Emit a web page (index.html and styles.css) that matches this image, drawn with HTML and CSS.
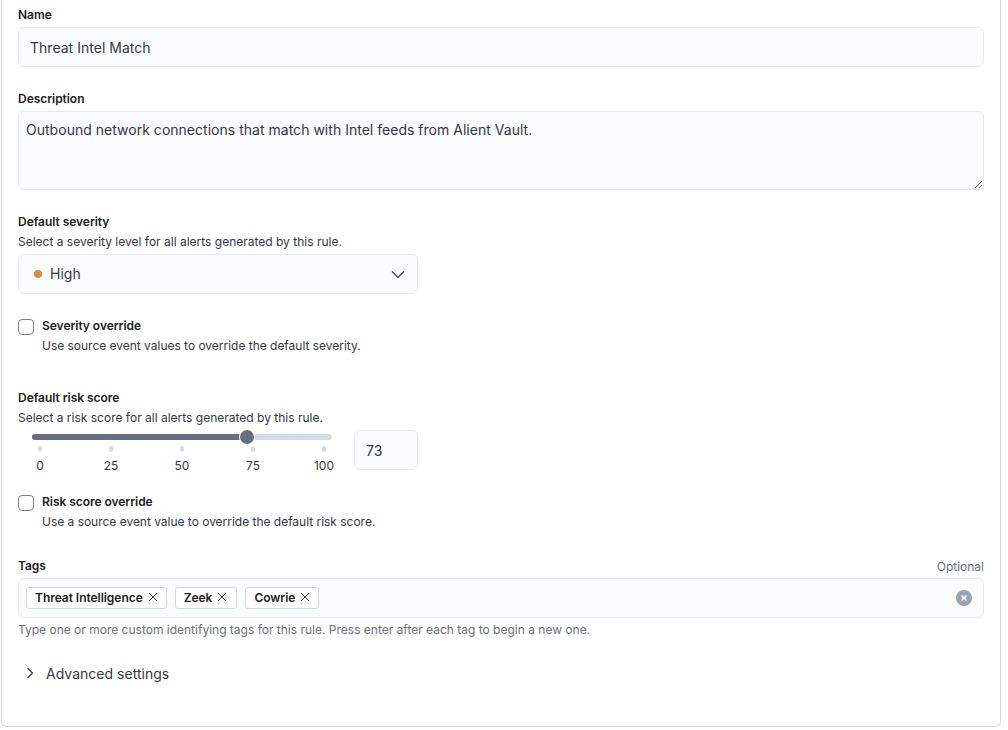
FILE: index.html
```html
<!DOCTYPE html>
<html lang="en">
<head>
<meta charset="utf-8">
<title>Rule settings</title>
<link rel="stylesheet" href="styles.css">
</head>
<body>
<main class="panel">
  <section class="field name-field">
    <div class="label">Name</div>
    <div class="control name-input">Threat Intel Match</div>
  </section>
  <section class="field desc-field">
    <div class="label">Description</div>
    <textarea class="control desc-input" spellcheck="false">Outbound network connections that match with Intel feeds from Alient Vault.</textarea>
  </section>
  <section class="field severity-field">
    <div class="label">Default severity</div>
    <div class="help">Select a severity level for all alerts generated by this rule.</div>
    <div class="control select">
      <span class="dot"></span>
      <span class="select-text">High</span>
      <svg class="chevron" width="16" height="16" viewBox="0 0 16 16" fill="none"><path d="M2 5.5 8 11.5l6-6" stroke="#343741" stroke-width="1.2"/></svg>
    </div>
  </section>
  <section class="check-row sev-override">
    <span class="checkbox"></span>
    <div>
      <div class="label">Severity override</div>
      <div class="help check-help">Use source event values to override the default severity.</div>
    </div>
  </section>
  <section class="field risk-field">
    <div class="label">Default risk score</div>
    <div class="help">Select a risk score for all alerts generated by this rule.</div>
    <div class="risk-row">
      <div class="slider">
        <div class="track"><div class="track-fill"></div><div class="thumb"></div></div>
        <div class="ticks">
          <div class="tick"><i></i><span>0</span></div>
          <div class="tick"><i></i><span>25</span></div>
          <div class="tick"><i></i><span>50</span></div>
          <div class="tick"><i></i><span>75</span></div>
          <div class="tick"><i></i><span>100</span></div>
        </div>
      </div>
      <div class="control number">73</div>
    </div>
  </section>
  <section class="check-row risk-override">
    <span class="checkbox"></span>
    <div>
      <div class="label">Risk score override</div>
      <div class="help check-help">Use a source event value to override the default risk score.</div>
    </div>
  </section>
  <section class="field tags-field">
    <div class="label-row">
      <div class="label">Tags</div>
      <div class="optional">Optional</div>
    </div>
    <div class="control tags">
      <span class="tag">Threat Intelligence<svg class="tag-x" width="10" height="10" viewBox="0 0 10 10"><path d="M1 1l8 8M9 1 1 9" stroke="#343741" stroke-width="1"/></svg></span>
      <span class="tag">Zeek<svg class="tag-x" width="10" height="10" viewBox="0 0 10 10"><path d="M1 1l8 8M9 1 1 9" stroke="#343741" stroke-width="1"/></svg></span>
      <span class="tag">Cowrie<svg class="tag-x" width="10" height="10" viewBox="0 0 10 10"><path d="M1 1l8 8M9 1 1 9" stroke="#343741" stroke-width="1"/></svg></span>
      <svg class="clear" width="16" height="16" viewBox="0 0 16 16"><circle cx="8" cy="8" r="8" fill="#98a2b3"/><path d="M5.5 5.5l5 5M10.5 5.5l-5 5" stroke="#fff" stroke-width="1.6"/></svg>
    </div>
    <div class="help muted">Type one or more custom identifying tags for this rule. Press enter after each tag to begin a new one.</div>
  </section>
  <div class="advanced">
    <svg width="16" height="16" viewBox="0 0 16 16" fill="none"><path d="M5.5 3l5 5-5 5" stroke="#343741" stroke-width="1.2"/></svg>
    <span>Advanced settings</span>
  </div>
</main>
</body>
</html>
```
FILE: styles.css
```css
* { box-sizing: border-box; }
html, body { margin: 0; padding: 0; background: #fff; }
body {
  width: 1008px;
  height: 730px;
  overflow: hidden;
  font-family: Inter, "Liberation Sans", sans-serif;
  color: #343741;
}
.panel {
  width: 1000px;
  height: 727px;
  margin-left: 1px;
  padding: 8px 16px 0;
  border: 1px solid #d3dae6;
  border-top: 0;
  border-radius: 0 0 6px 6px;
}
.label {
  font-size: 12px;
  line-height: 14px;
  font-weight: 600;
  letter-spacing: -0.04px;
  color: #1a1c21;
}
.help {
  font-size: 12px;
  line-height: 16px;
  color: #343741;
}
.muted { color: #69707d; }
.control {
  background: #fafbfd;
  border: 1px solid #e6e9f0;
  border-radius: 6px;
  font-family: inherit;
  color: #343741;
  letter-spacing: 0.02px;
}
.name-input {
  height: 40px;
  margin-top: 5px;
  padding: 0 11px;
  font-size: 14px;
  line-height: 40px;
}
.desc-field { margin-top: 25px; }
.desc-input {
  display: block;
  width: 966px;
  height: 79px;
  margin-top: 5px;
  padding: 4px 7px;
  font-size: 14px;
  line-height: 28px;
  outline: none;
}
.severity-field { margin-top: 25px; }
.severity-field .help { margin-top: 5px; }
.select {
  display: flex;
  align-items: center;
  width: 400px;
  height: 40px;
  margin-top: 4px;
  padding: 0 11px 1px 15px;
  font-size: 14px;
}
.dot {
  width: 8px;
  height: 8px;
  border-radius: 50%;
  background: #da8b45;
}
.select-text { margin-left: 8px; flex: 1; }
.check-row { display: flex; gap: 8px; }
.checkbox {
  flex: none;
  width: 16px;
  height: 16px;
  background: #fff;
  border: 1px solid #7a7f88;
  border-radius: 4px;
}
.check-help { margin-top: 5px; letter-spacing: -0.02px; }
.sev-override { margin-top: 25px; }
.risk-field { margin-top: 37px; }
.risk-field .help { margin-top: 5px; }
.risk-row { display: flex; margin-top: 5px; }
.slider { width: 336px; flex: none; }
.track {
  position: relative;
  width: 300px;
  height: 6px;
  margin: 3px 0 0 14px;
  background: #d3dae6;
  border-radius: 3px;
}
.track-fill {
  width: 215px;
  height: 6px;
  background: #69707d;
  border-radius: 3px;
}
.thumb {
  position: absolute;
  left: 208px;
  top: -4px;
  width: 14px;
  height: 14px;
  background: #69707d;
  border-radius: 50%;
  box-shadow: 0 0 0 1px #fff;
}
.ticks {
  display: flex;
  justify-content: space-between;
  width: 284px;
  margin: 6px 0 0 22px;
}
.tick {
  width: 0;
  display: flex;
  flex-direction: column;
  align-items: center;
}
.tick i {
  display: block;
  flex: none;
  width: 4px;
  height: 6px;
  background: #d3dae6;
  border-radius: 2px;
}
.tick span {
  margin-top: 6px;
  font-size: 12px;
  line-height: 16px;
}
.number {
  flex: none;
  width: 64px;
  height: 40px;
  margin-top: -1px;
  padding: 0 11px;
  font-size: 14px;
  line-height: 40px;
}
.risk-override { margin-top: 21px; }
.tags-field { margin-top: 28px; }
.label-row { display: flex; justify-content: space-between; align-items: center; height: 16px; }
.optional { font-size: 12px; color: #69707d; }
.tags {
  display: flex;
  align-items: center;
  gap: 8px;
  height: 40px;
  margin-top: 4px;
  padding: 0 11px 0 7px;
  letter-spacing: normal;
}
.tag {
  display: inline-flex;
  align-items: center;
  height: 22px;
  padding: 0 8px 2px;
  font-size: 12px;
  font-weight: 600;
  letter-spacing: -0.04px;
  color: #1a1c21;
  background: #fff;
  border: 1px solid #d3dae6;
  border-radius: 3px;
}
.tag:nth-child(2) { padding-right: 9px; }
.tag-x { margin-left: 5px; }
.clear { margin-left: auto; }
.tags-field .help { margin-top: 4px; }
.advanced {
  display: flex;
  align-items: center;
  gap: 8px;
  margin: 23px 0 0 4px;
  height: 24px;
  font-size: 14px;
  letter-spacing: 0.02px;
  color: #343741;
}
```
